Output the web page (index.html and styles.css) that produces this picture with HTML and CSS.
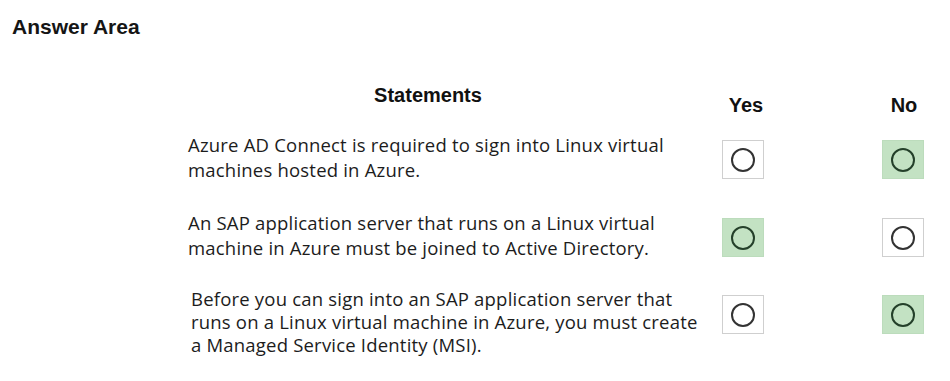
FILE: index.html
```html
<!DOCTYPE html>
<html>
  <head>
    <title>Answer Area</title>
    <link rel="stylesheet" href="styles.css">
  </head>

  <body>
    <h1 class="title">Answer Area</h1>

    <div class="answer-area">
      <div class="row head-row">
        <div class="head head-statements">Statements</div>
        <div class="head head-choice head-yes">Yes</div>
        <div class="head head-choice">No</div>
      </div>

      <div class="row statement-row row-1">
        <div class="statement">
          Azure AD Connect is required to sign into Linux virtual<br />
          machines hosted in Azure.
        </div>
        <div class="option"><span class="circle"></span></div>
        <div class="option selected"><span class="circle"></span></div>
      </div>

      <div class="row statement-row row-2">
        <div class="statement">
          An SAP application server that runs on a Linux virtual<br />
          machine in Azure must be joined to Active Directory.
        </div>
        <div class="option selected"><span class="circle"></span></div>
        <div class="option"><span class="circle"></span></div>
      </div>

      <div class="row statement-row row-3">
        <div class="statement tight">
          Before you can sign into an SAP application server that<br />
          runs on a Linux virtual machine in Azure, you must create<br />
          a Managed Service Identity (MSI).
        </div>
        <div class="option"><span class="circle"></span></div>
        <div class="option selected"><span class="circle"></span></div>
      </div>
    </div>
  </body>
</html>
```

FILE: styles.css
```css
body {
  margin: 0;
  padding: 15px 12px 0;
  background-color: white;
  color: #1c1c1c;
  font-family: "Open Sans", "Liberation Sans", sans-serif;
}

.title {
  margin: 0;
  font-family: "Liberation Sans", Arial, sans-serif;
  font-size: 21px;
  line-height: 24px;
  font-weight: bold;
  color: #151515;
}

.answer-area {
  margin-top: 44px;
  padding-left: 176px;
}

.row {
  display: grid;
  grid-template-columns: 520px 56px 160px;
}

.head {
  font-family: "Liberation Sans", Arial, sans-serif;
  font-size: 20px;
  line-height: 24px;
  font-weight: bold;
  color: #111;
}

.head-statements {
  padding-right: 40px;
  text-align: center;
}

.head-choice {
  justify-self: end;
  width: 44px;
  margin-top: 10px;
  margin-right: -2px;
  text-align: center;
}

.head-yes {
  margin-right: -4px;
}

.row-1 {
  margin-top: 15px;
}

.row-2 {
  margin-top: 28px;
}

.row-3 {
  margin-top: 27px;
}

.statement {
  font-size: 18.5px;
  line-height: 25px;
  letter-spacing: 0.2px;
  white-space: nowrap;
}

.statement.tight {
  line-height: 23px;
  padding-left: 3px;
}

.option {
  justify-self: end;
  align-self: start;
  margin-top: 8px;
  width: 42px;
  height: 39px;
  box-sizing: border-box;
  border: 1px solid #cfcfcf;
  display: flex;
  align-items: center;
  justify-content: center;
}

.option.selected {
  background-color: #c3e2c3;
  border-color: #bcdcbc;
}

.circle {
  width: 24px;
  height: 24px;
  box-sizing: border-box;
  border: 2px solid #333;
  border-radius: 50%;
}

.selected .circle {
  border-color: #24402a;
}
```
